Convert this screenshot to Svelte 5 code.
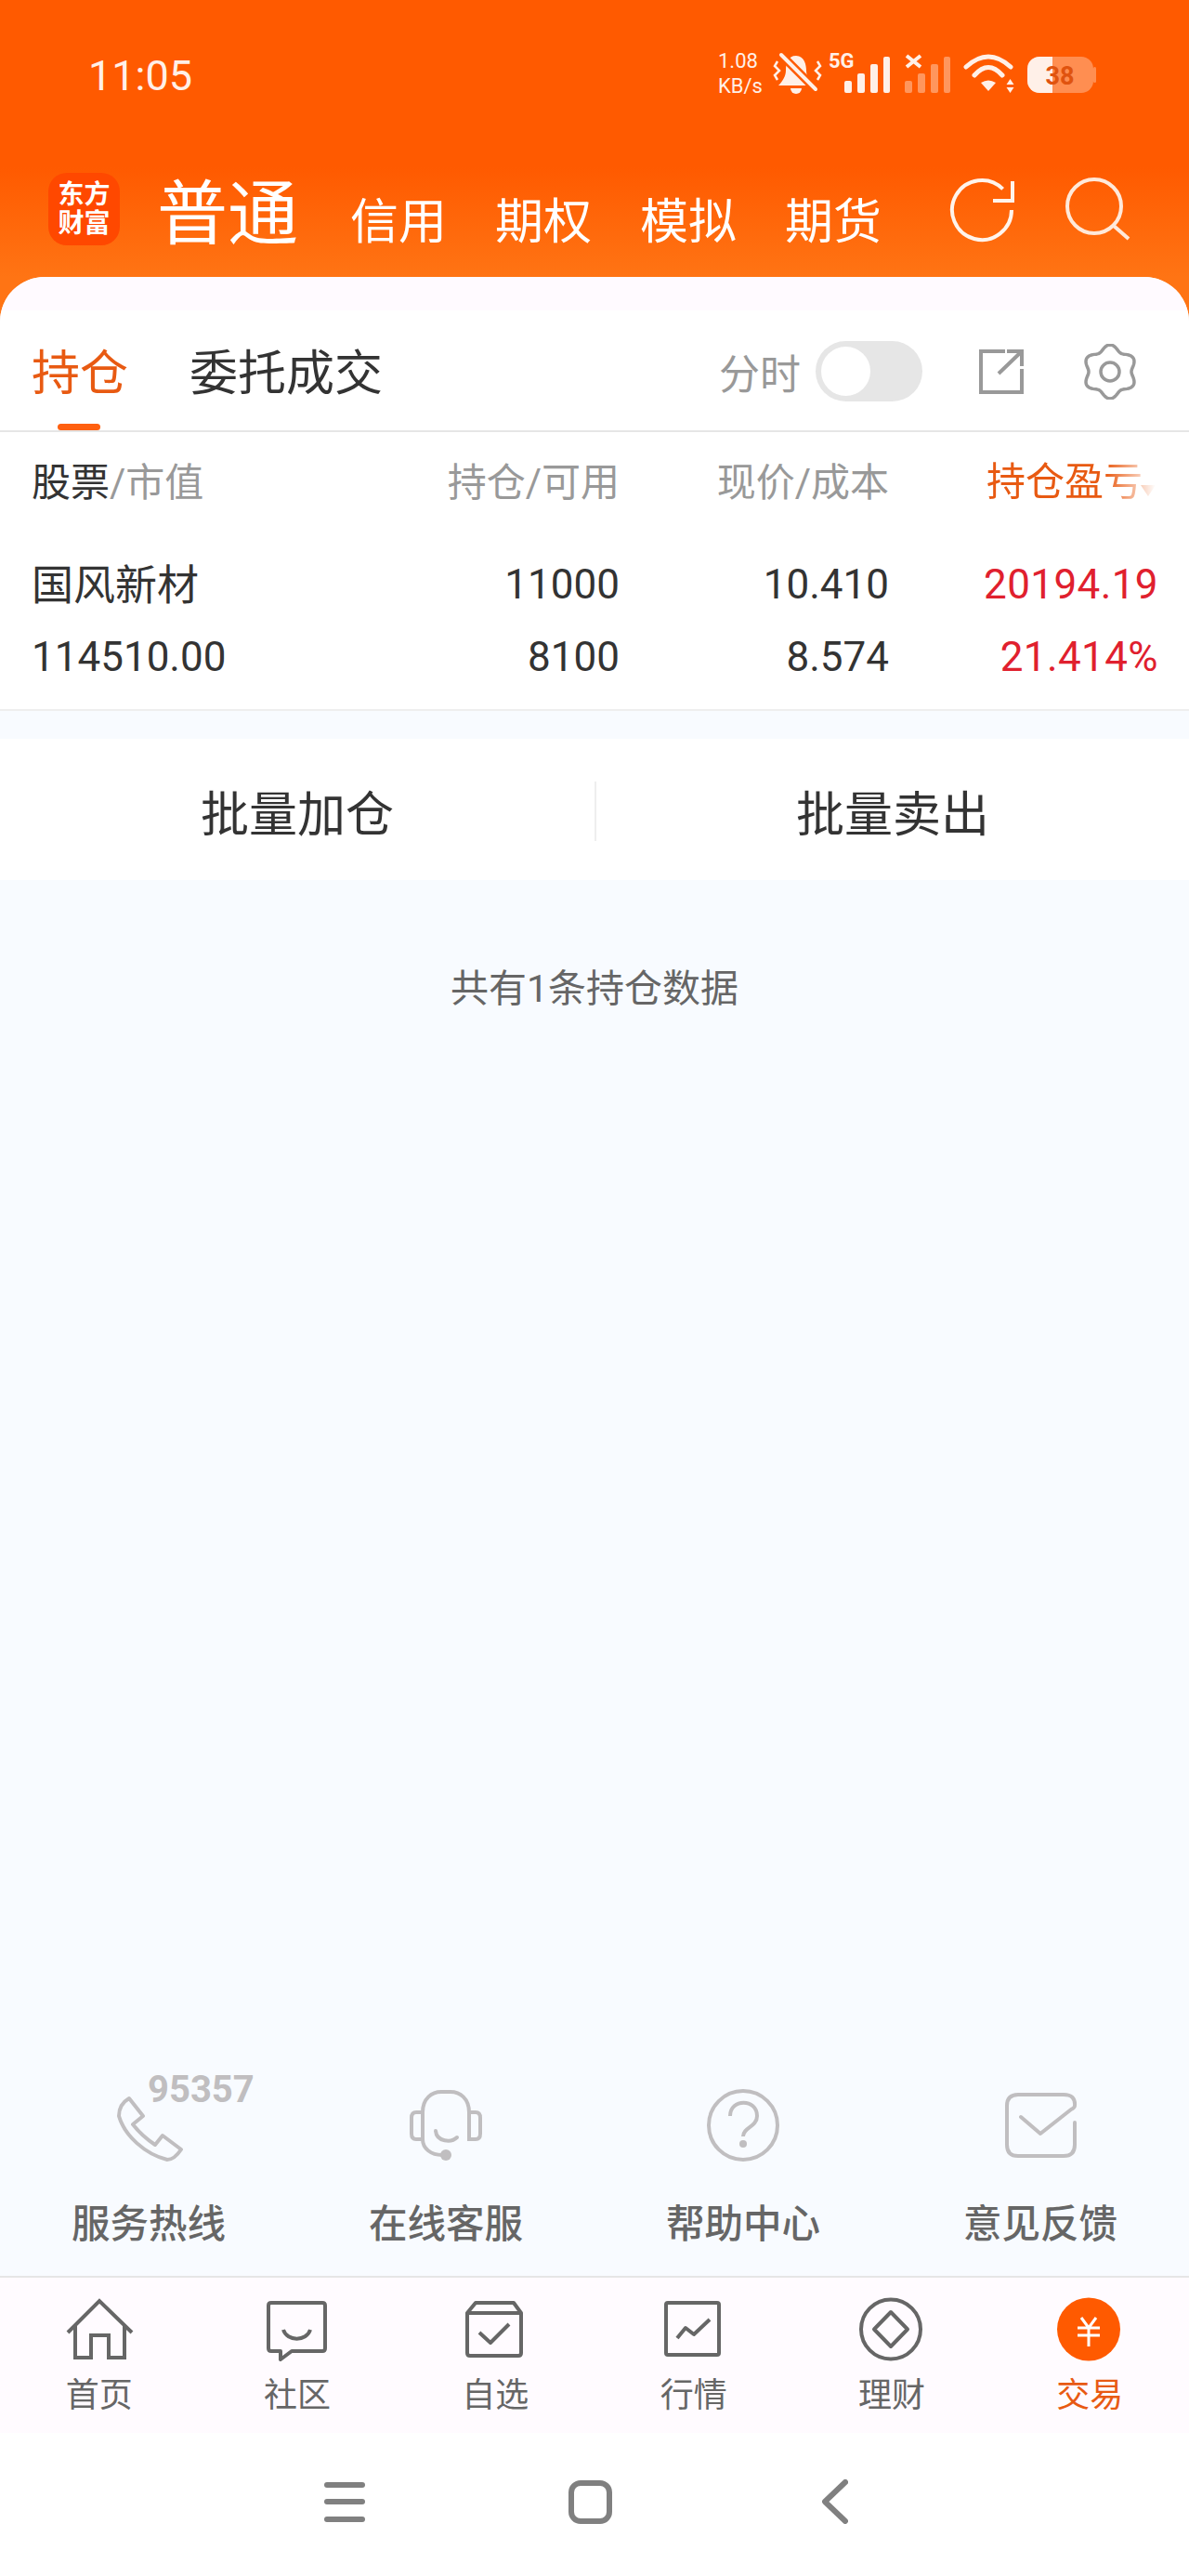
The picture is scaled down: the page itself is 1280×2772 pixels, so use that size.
<script>
  const tabs = [
    { name: "持仓", active: true },
    { name: "委托成交", active: false },
  ];
  const kinds = ["信用", "期权", "模拟", "期货"];

  // six lobes, one of them pointing straight up
  const gearPath = Array.from({ length: 120 }, (_, i) => {
    const a = (i / 120) * Math.PI * 2;
    const r = 26 + 3 * Math.cos(6 * a);
    const x = 30 + r * Math.sin(a);
    const y = 30 - r * Math.cos(a);
    return `${i ? "L" : "M"}${x.toFixed(2)} ${y.toFixed(2)}`;
  }).join(" ") + " Z";
</script>

<div class="page">
  <header class="top">
    <div class="status">
      <span class="time">11:05</span>
      <svg class="status-icons" width="415" height="55" viewBox="770 50 415 55">
        <text x="773" y="73" class="speed">1.08</text>
        <text x="773" y="100" class="speed">KB/s</text>

        <path d="M857 60C866 60 868 70 868 76C868 82 872 88 875 92H838C842 88 846 82 846 76C846 68 848 60 857 60Z" fill="#fff0e8" />
        <path d="M851 95a6 6 0 0 0 12 0Z" fill="#fff0e8" />
        <path d="M841 59L878 96" stroke="#ff5a00" stroke-width="9" />
        <path d="M841 59L878 96" stroke="#fff0e8" stroke-width="4" stroke-linecap="round" />
        <path d="M837 66l-3 5 5 5-5 5 3 5M880 66l3 5-5 5 5 5-3 5" fill="none" stroke="#fff0e8" stroke-width="2.5" />

        <text x="892" y="73" class="net">5G</text>
        <rect x="909" y="87" width="8" height="13" rx="2" fill="#fff0e8" />
        <rect x="923" y="79" width="8" height="21" rx="2" fill="#fff0e8" />
        <rect x="937" y="69" width="8" height="31" rx="2" fill="#fff0e8" />
        <rect x="951" y="61" width="7" height="39" rx="2" fill="#fff0e8" />

        <path d="M976 60L991 72M991 60L976 72" stroke="#fff0e8" stroke-width="4" />
        <g fill="#fff0e8" opacity="0.4">
          <rect x="974" y="87" width="8" height="13" rx="2" />
          <rect x="988" y="79" width="8" height="21" rx="2" />
          <rect x="1002" y="69" width="8" height="31" rx="2" />
          <rect x="1016" y="61" width="7" height="39" rx="2" />
        </g>

        <path d="M1040 72Q1064 50 1088 72M1049 81Q1064 64 1079 81" fill="none" stroke="#fff0e8" stroke-width="5" stroke-linecap="round" />
        <path d="M1056 89Q1064 84 1072 89L1064 98Z" fill="#fff0e8" />
        <path d="M1083.5 91L1087.5 85L1091.5 91ZM1083.5 94L1087.5 100L1091.5 94Z" fill="#fff0e8" />

        <rect x="1106" y="61" width="71" height="39" rx="13" fill="#fff0e8" opacity="0.35" />
        <rect x="1177" y="72" width="3" height="17" rx="1.5" fill="#fff0e8" opacity="0.35" />
        <path d="M1133 61H1119A13 13 0 0 0 1106 74V87A13 13 0 0 0 1119 100H1133Z" fill="#fff0e8" />
        <text x="1141" y="91" class="batt">38</text>
      </svg>
    </div>

    <div class="brand-row">
      <div class="logo"><span>东方</span><span>财富</span></div>
      <span class="kind-active">普通</span>
      <nav class="kinds">
        {#each kinds as kind}
          <span>{kind}</span>
        {/each}
      </nav>
      <svg class="refresh" width="70" height="70" viewBox="0 0 70 70" fill="none" stroke="#fff4ec" stroke-width="4">
        <path d="M57.6 11.4A32 32 0 1 0 67 34" />
        <path d="M68 3V24H47" />
      </svg>
      <svg class="search" width="72" height="70" viewBox="0 0 72 70" fill="none" stroke="#ffe9da" stroke-width="4">
        <circle cx="32" cy="32" r="29" />
        <path d="M53 53L69 67" />
      </svg>
    </div>

    <main class="panel">
      <div class="tabs">
        {#each tabs as tab}
          <span class="tab" class:active={tab.active}>{tab.name}</span>
        {/each}
        <div class="tools">
          <span class="tool-label">分时</span>
          <span class="toggle"><i></i></span>
          <svg class="share" width="50" height="50" viewBox="0 0 50 50" fill="none" stroke="#999" stroke-width="4">
            <path d="M29 3H3V47H47V22" />
            <path d="M22 27L47 3M31 3H47V19" />
          </svg>
          <svg width="60" height="60" viewBox="0 0 60 60" fill="none" stroke="#999" stroke-width="3.5">
            <path d={gearPath} stroke-linejoin="round" />
            <circle cx="30" cy="30" r="10" />
          </svg>
        </div>
      </div>

      <div class="cols heading">
        <span class="name-head"><b>股票</b>/市值</span>
        <span>持仓/可用</span>
        <span>现价/成本</span>
        <span class="sort"><em>持仓盈亏</em><i></i></span>
      </div>

      <div class="position">
        <div class="cols line">
          <span class="stock">国风新材</span>
          <span>11000</span>
          <span>10.410</span>
          <span class="up">20194.19</span>
        </div>
        <div class="cols line">
          <span class="left">114510.00</span>
          <span>8100</span>
          <span>8.574</span>
          <span class="up">21.414%</span>
        </div>
      </div>

      <div class="batch">
        <span>批量加仓</span>
        <span>批量卖出</span>
      </div>

      <p class="count">共有1条持仓数据</p>

      <div class="services">
        <div class="service">
          <div class="service-icon">
            <span class="hotline">95357</span>
            <svg width="80" height="80" viewBox="0 0 80 80" fill="none" stroke="#c0bec0" stroke-width="4" stroke-linejoin="round">
              <path d="M19 10L34 29L23 38C30 47 38 54 47 60L55 50L75 65C71 71 66 76 60 76C36 70 14 50 8 29C8 20 12 14 19 10Z" />
            </svg>
          </div>
          <span class="service-name">服务热线</span>
        </div>
        <div class="service">
          <div class="service-icon">
            <svg width="80" height="80" viewBox="0 0 80 80" fill="none" stroke="#c0bec0" stroke-width="4" stroke-linecap="round">
              <path d="M15 25C15 10 25 3 35 3H45C55 3 65 10 65 25" />
              <path d="M15 25H8Q3 25 3 31V48Q3 54 8 54H15ZM65 25H72Q77 25 77 31V48Q77 54 72 54H65Z" />
              <path d="M15 54C15 64 24 71 36 71" />
              <path d="M29 45C30 57 46 58 52 52" />
              <circle cx="40" cy="71" r="6" fill="#c0bec0" stroke="none" />
            </svg>
          </div>
          <span class="service-name">在线客服</span>
        </div>
        <div class="service">
          <div class="service-icon">
            <svg width="80" height="80" viewBox="0 0 80 80" fill="none" stroke="#c0bec0" stroke-width="4">
              <circle cx="40" cy="39" r="37" />
              <path d="M26 29C26 10 55 10 55 29C55 41 40 41 40 51" />
              <circle cx="40" cy="59" r="4" fill="#c0bec0" stroke="none" />
            </svg>
          </div>
          <span class="service-name">帮助中心</span>
        </div>
        <div class="service">
          <div class="service-icon">
            <svg width="80" height="80" viewBox="0 0 80 80" fill="none" stroke="#c0bec0" stroke-width="4" stroke-linecap="round" stroke-linejoin="round">
              <path d="M77 36V60Q77 72 65 72H16Q4 72 4 60V18Q4 6 16 6H65Q78 6 77 18Q77 20 73 22L40 48L19 30" />
            </svg>
          </div>
          <span class="service-name">意见反馈</span>
        </div>
      </div>

      <nav class="bottom">
        <div class="bottom-tab">
          <svg width="80" height="72" viewBox="0 0 80 72" fill="none" stroke="#666" stroke-width="4">
            <path d="M6 40L40 6L75 40M14 32V67H31V43H50V67H67V32" />
          </svg>
          <span>首页</span>
        </div>
        <div class="bottom-tab">
          <svg width="80" height="72" viewBox="0 0 80 72" fill="none" stroke="#666" stroke-width="4" stroke-linejoin="round">
            <path d="M12 8H67Q70 8 70 11V57Q70 60 67 60H34L22 69V60H12Q9 60 9 57V11Q9 8 12 8Z" />
            <path d="M25 37C29 50 50 50 54 37" />
          </svg>
          <span>社区</span>
        </div>
        <div class="bottom-tab">
          <svg width="80" height="72" viewBox="0 0 80 72" fill="none" stroke="#666" stroke-width="4" stroke-linejoin="round">
            <path d="M19 8H60L68 19V62Q68 65 65 65H13Q10 65 10 62V19ZM10 19H68" />
            <path d="M23 40L35 51L55 31" />
          </svg>
          <span>自选</span>
        </div>
        <div class="bottom-tab">
          <svg width="80" height="72" viewBox="0 0 80 72" fill="none" stroke="#666" stroke-width="4" stroke-linejoin="round">
            <rect x="10" y="8" width="57" height="56" rx="2" />
            <path d="M22 46L31 35L40 42L57 26" />
          </svg>
          <span>行情</span>
        </div>
        <div class="bottom-tab">
          <svg width="80" height="72" viewBox="0 0 80 72" fill="none" stroke="#666" stroke-width="4" stroke-linejoin="round">
            <circle cx="39" cy="36.5" r="32" />
            <path d="M39 18L57 36.5L39 55L21 36.5Z" />
          </svg>
          <span>理财</span>
        </div>
        <div class="bottom-tab current">
          <svg width="80" height="72" viewBox="0 0 80 72" fill="none" stroke="#fff" stroke-width="3">
            <circle cx="39" cy="36.5" r="34" fill="#ff5a00" stroke="none" />
            <path d="M31 24L39 35L47 24M27 35H51M27 43H51M39 35V55" />
          </svg>
          <span>交易</span>
        </div>
      </nav>

      <div class="system">
        <span class="menu"><i></i><i></i><i></i></span>
        <span class="square"></span>
        <svg width="28" height="48" viewBox="0 0 28 48" fill="none" stroke="#808080" stroke-width="6" stroke-linecap="round" stroke-linejoin="round">
          <path d="M25 3L3 24L25 45" />
        </svg>
      </div>
    </main>
  </header>
</div>

<style>
  :global(body) {
    margin: 0;
  }

  .page {
    width: 1280px;
    height: 2772px;
    overflow: hidden;
    font-family: Roboto, "Noto Sans CJK SC", sans-serif;
    color: #333;
  }

  .top {
    height: 100%;
    display: flex;
    flex-direction: column;
    background: linear-gradient(#ff5a00 0, #ff5a00 180px, #ff7414 298px, #ff7414 360px);
    background-repeat: no-repeat;
  }

  .status {
    height: 164px;
    box-sizing: border-box;
    padding: 50px 95px 0 95px;
    display: flex;
    align-items: flex-start;
    justify-content: space-between;
  }

  .time {
    font-size: 45px;
    line-height: 64px;
    color: #fff0e8;
  }

  .status-icons {
    display: block;
  }

  .speed {
    font-size: 22px;
    fill: #fff0e8;
  }

  .net {
    font-size: 22px;
    font-weight: 700;
    fill: #fff0e8;
  }

  .batt {
    font-size: 27px;
    font-weight: 700;
    fill: #e0530f;
    text-anchor: middle;
  }

  .brand-row {
    height: 134px;
    box-sizing: border-box;
    padding: 0 62px 31px 52px;
    display: flex;
    align-items: flex-end;
    color: #fff;
  }

  .logo {
    width: 77px;
    height: 78px;
    margin-bottom: 3px;
    border-radius: 20px;
    background: #ff4800;
    display: flex;
    flex-direction: column;
    align-items: center;
    justify-content: center;
    font-size: 28px;
    line-height: 31px;
    font-weight: 700;
  }

  .kind-active {
    margin-left: 40px;
    margin-bottom: -3px;
    font-size: 76px;
    line-height: 78px;
  }

  .kinds {
    display: flex;
    gap: 52px;
    margin-left: 56px;
    font-size: 52px;
    line-height: 54px;
  }

  .refresh {
    margin-left: auto;
    margin-bottom: 5px;
  }

  .search {
    margin-left: 54px;
    margin-bottom: 7px;
  }

  .panel {
    flex: 1;
    display: flex;
    flex-direction: column;
    border-radius: 48px 48px 0 0;
    background: #f8fbff;
  }

  .tabs {
    height: 167px;
    box-sizing: border-box;
    padding: 38px 55px 0 34px;
    display: flex;
    align-items: center;
    gap: 66px;
    border-bottom: 2px solid #e6e6e6;
    border-radius: 48px 48px 0 0;
    background: linear-gradient(#fffaff 36px, #fff 36px);
  }

  .tab {
    position: relative;
    padding-top: 6px;
    font-size: 52px;
    line-height: 60px;
  }

  .tab.active {
    color: #e85a12;
  }

  .tab.active::after {
    content: "";
    position: absolute;
    left: 28px;
    bottom: -30px;
    width: 46px;
    height: 7px;
    border-radius: 4px;
    background: #ff6010;
  }

  .tools {
    margin-left: auto;
    display: flex;
    align-items: center;
  }

  .tool-label {
    font-size: 44px;
    color: #999;
    margin-right: 16px;
  }

  .toggle {
    width: 115px;
    height: 65px;
    box-sizing: border-box;
    padding: 6px;
    border-radius: 33px;
    background: #e6e6e6;
  }

  .toggle i {
    display: block;
    width: 53px;
    height: 53px;
    border-radius: 50%;
    background: #fff;
  }

  .share {
    margin: 0 62px 0 60px;
  }

  .cols {
    display: grid;
    grid-template-columns: 363px 270px 290px 290px;
    padding-left: 34px;
    text-align: right;
  }

  .heading {
    height: 105px;
    box-sizing: border-box;
    padding-bottom: 4px;
    align-items: center;
    background: #fff;
    font-size: 42px;
    color: #999;
  }

  .name-head {
    text-align: left;
  }

  .name-head b {
    font-weight: 400;
    color: #333;
  }

  .sort {
    position: relative;
    top: 3px;
    width: 185px;
    height: 56px;
    justify-self: end;
    text-align: left;
    white-space: nowrap;
    overflow: hidden;
    color: #e85a12;
    -webkit-mask-image: linear-gradient(90deg, #000 128px, transparent 182px);
    mask-image: linear-gradient(90deg, #000 128px, transparent 182px);
  }

  .sort em {
    font-style: normal;
    line-height: 56px;
  }

  .sort i {
    position: absolute;
    right: 3px;
    top: 31px;
    width: 0;
    height: 0;
    border-left: 8px solid transparent;
    border-right: 8px solid transparent;
    border-top: 12px solid #e85a12;
  }

  .position {
    padding: 19px 0 18px;
    background: #fff;
    border-bottom: 2px solid #eee;
  }

  .line {
    height: 78px;
    box-sizing: border-box;
    padding-top: 2px;
    align-items: center;
    font-size: 44px;
    color: #333;
  }

  .stock {
    margin-bottom: 6px;
    font-size: 45px;
    text-align: left;
  }

  .left {
    text-align: left;
  }

  .up {
    letter-spacing: 0.4px;
    color: #e0202e;
  }

  .batch {
    height: 152px;
    box-sizing: border-box;
    padding-top: 3px;
    margin-top: 30px;
    background: #fff;
    display: grid;
    grid-template-columns: 1fr 1fr;
    align-items: center;
    text-align: center;
    font-size: 52px;
    line-height: 54px;
  }

  .batch span {
    padding-top: 10px;
  }

  .batch span + span {
    border-left: 2px solid #eee;
  }

  .count {
    margin: 92px 0 0;
    text-align: center;
    font-size: 41px;
    line-height: 50px;
    color: #666;
  }

  .services {
    margin-top: auto;
    display: grid;
    grid-template-columns: repeat(4, 1fr);
    padding-bottom: 30px;
  }

  .service {
    display: flex;
    flex-direction: column;
    align-items: center;
  }

  .service-icon {
    position: relative;
    height: 80px;
  }

  .service-icon svg {
    display: block;
  }

  .hotline {
    position: absolute;
    left: 39px;
    top: -19px;
    font-size: 40px;
    line-height: 40px;
    font-weight: 700;
    color: #c0bec0;
  }

  .service-name {
    margin-top: 41px;
    font-size: 41.5px;
    line-height: 50px;
    font-weight: 500;
    color: #666;
  }

  .bottom {
    height: 169px;
    box-sizing: border-box;
    padding: 19px 0 0;
    border-top: 2px solid #e6e6e6;
    background: #fffbff;
    display: grid;
    grid-template-columns: repeat(6, 1fr);
  }

  .bottom-tab {
    display: flex;
    flex-direction: column;
    align-items: center;
    font-size: 36px;
    line-height: 44px;
    color: #666;
  }

  .bottom-tab svg {
    display: block;
    margin-bottom: 14px;
  }

  .bottom-tab.current {
    color: #e85a12;
  }

  .system {
    height: 154px;
    box-sizing: border-box;
    padding: 0 0 6px 349px;
    background: #fff;
    display: flex;
    align-items: center;
  }

  .menu {
    width: 44px;
    height: 43px;
    display: flex;
    flex-direction: column;
    justify-content: space-between;
    margin-right: 219px;
  }

  .menu i {
    display: block;
    height: 6px;
    border-radius: 3px;
    background: #808080;
  }

  .square {
    width: 47px;
    height: 47px;
    box-sizing: border-box;
    border: 6px solid #808080;
    border-radius: 13px;
    margin-right: 226px;
  }
</style>
